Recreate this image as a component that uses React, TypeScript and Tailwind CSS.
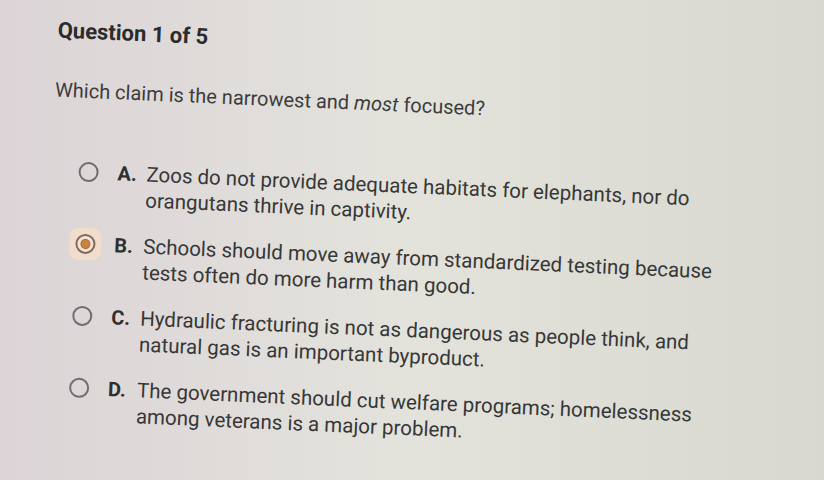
import React from 'react';

interface Choice {
  letter: string;
  lines: string[];
  selected?: boolean;
}

const CHOICES: Choice[] = [
  {
    letter: 'A',
    lines: ['Zoos do not provide adequate habitats for elephants, nor do', 'orangutans thrive in captivity.'],
  },
  {
    letter: 'B',
    lines: ['Schools should move away from standardized testing because', 'tests often do more harm than good.'],
    selected: true,
  },
  {
    letter: 'C',
    lines: ['Hydraulic fracturing is not as dangerous as people think, and', 'natural gas is an important byproduct.'],
  },
  {
    letter: 'D',
    lines: ['The government should cut welfare programs; homelessness', 'among veterans is a major problem.'],
  },
];

const Radio: React.FC<{ selected?: boolean }> = ({ selected }) => {
  if (selected) {
    return (
      <span className="relative flex h-[20px] w-[20px] shrink-0 items-center justify-center">
        <span className="absolute -inset-[6px] rounded-[9px] bg-[#f2dccb]" />
        <span className="relative flex h-[20px] w-[20px] items-center justify-center rounded-full border-2 border-[#806b5f] bg-[#f2e2d4]">
          <span className="h-[10px] w-[10px] rounded-full border border-[#a8662f] bg-[#c98440]" />
        </span>
      </span>
    );
  }
  return <span className="h-[20px] w-[20px] shrink-0 rounded-full border-2 border-[#6e6e6e]" />;
};

export default function App() {
  return (
    <div
      className="h-[480px] w-[824px] overflow-hidden bg-linear-to-r from-[#dcd4d7] via-[#e3e3dc] to-[#d8d8d1] text-[#373737]"
      style={{ fontFamily: 'Roboto, "Liberation Sans", Arial, sans-serif' }}
    >
      {/* photo of the screen is tilted a little clockwise */}
      <div className="w-[824px] origin-top-left rotate-[2.5deg]">
        <div className="pl-[59px] pt-[14px]">
          <h1 className="text-[22px] font-bold leading-[28px] text-[#2b2b2b]">Question 1 of 5</h1>
          <p className="mt-[31px] text-[20px] leading-[28px] text-[#3c3c3c]">
            Which claim is the narrowest and <i>most</i> focused?
          </p>
        </div>

        <div className="mt-[54px] flex flex-col gap-[20px] pl-[86px]">
          {CHOICES.map((c) => (
            <div key={c.letter} className="flex items-start">
              <div className="flex h-[26px] items-center">
                <Radio selected={c.selected} />
              </div>
              <span className="ml-[19px] w-[29px] shrink-0 text-[20px] font-bold leading-[26px] text-[#2f2f2f]">
                {c.letter}.
              </span>
              <div className="text-[20.5px] leading-[26px] whitespace-nowrap">
                {c.lines.map((l, i) => (
                  <div key={i}>{l}</div>
                ))}
              </div>
            </div>
          ))}
        </div>
      </div>
    </div>
  );
}
